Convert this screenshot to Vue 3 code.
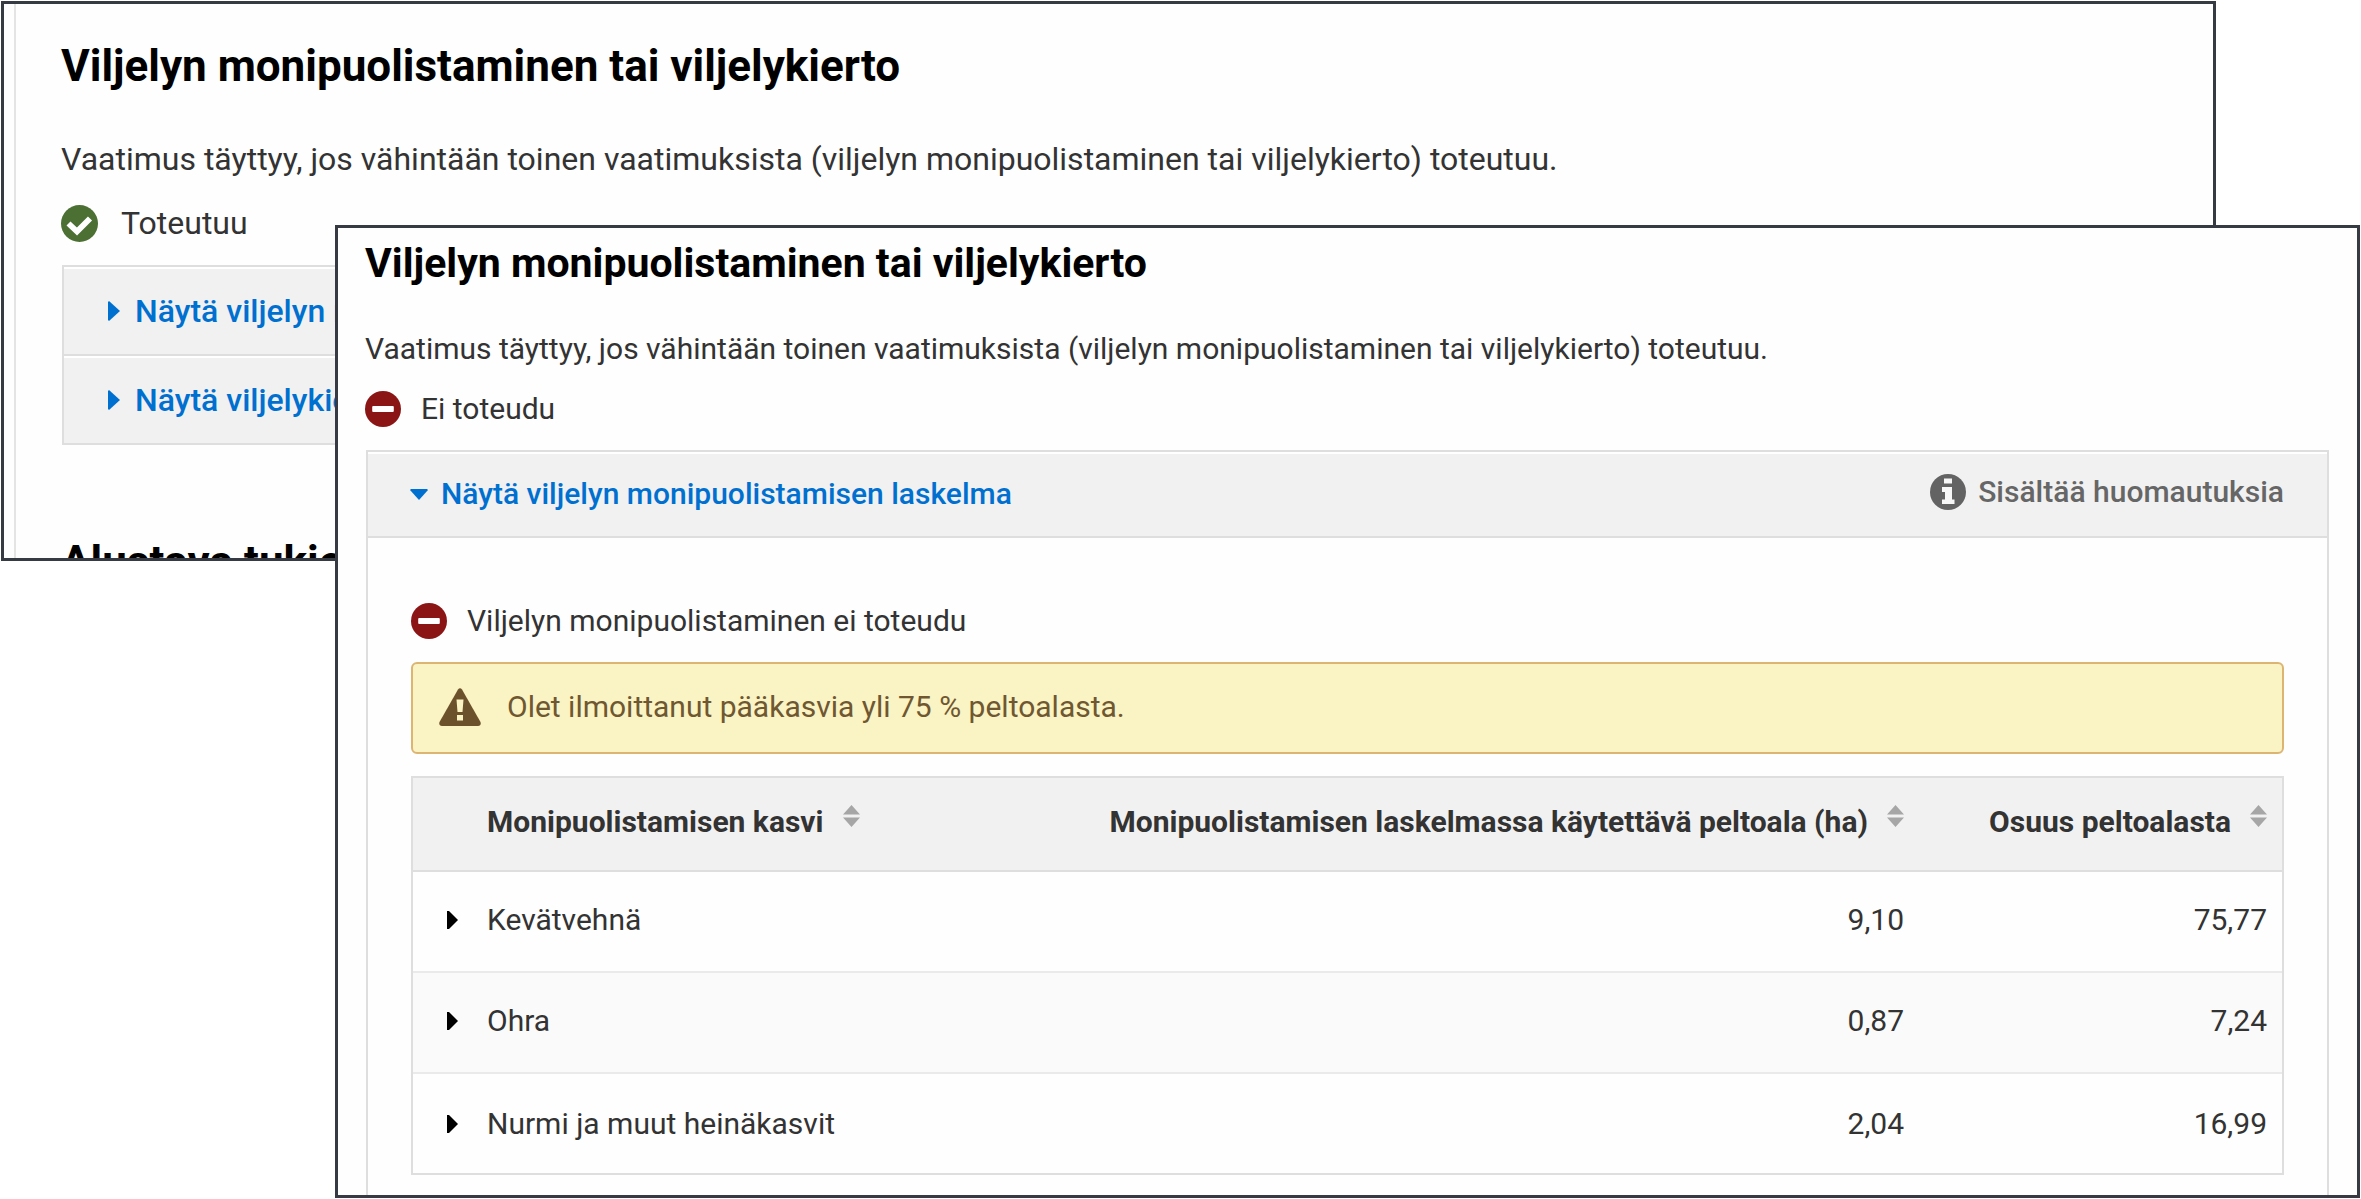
<script setup>
import { ref } from 'vue'

const requirement =
  'Vaatimus täyttyy, jos vähintään toinen vaatimuksista (viljelyn monipuolistaminen tai viljelykierto) toteutuu.'

const backRows = [
  'Näytä viljelyn monipuolistamisen laskelma',
  'Näytä viljelykierron laskelma',
]

const columns = [
  { key: 'crop', label: 'Monipuolistamisen kasvi' },
  { key: 'area', label: 'Monipuolistamisen laskelmassa käytettävä peltoala (ha)' },
  { key: 'share', label: 'Osuus peltoalasta' },
]

const crops = ref([
  { name: 'Kevätvehnä', area: '9,10', share: '75,77' },
  { name: 'Ohra', area: '0,87', share: '7,24' },
  { name: 'Nurmi ja muut heinäkasvit', area: '2,04', share: '16,99' },
])
</script>

<template>
  <main class="stage">
    <section class="window back">
      <div class="back-body">
        <h2 class="title">Viljelyn monipuolistaminen tai viljelykierto</h2>
        <p class="lead">{{ requirement }}</p>
        <div class="status">
          <svg class="status-icon" viewBox="0 0 37 37" aria-hidden="true">
            <circle cx="18.500" cy="18.500" r="18.500" fill="#4c7034" />
            <path d="M7.500 18.500 L16 26.500 L29 13.500" fill="none" stroke="#fff" stroke-width="5.800" />
          </svg>
          <span>Toteutuu</span>
        </div>
        <ul class="accordion">
          <li v-for="row in backRows" :key="row" class="accordion-item">
            <button type="button" class="toggle">
              <svg class="caret-right" viewBox="0 0 12 20" aria-hidden="true">
                <path d="M0 1 L1 0 L12 10 L1 20 L0 19 Z" fill="currentColor" />
              </svg>
              <span>{{ row }}</span>
            </button>
          </li>
        </ul>
        <h2 class="title next-title">Alustava tukien määrä</h2>
      </div>
    </section>

    <section class="window front">
      <h2 class="title">Viljelyn monipuolistaminen tai viljelykierto</h2>
      <p class="lead">{{ requirement }}</p>
      <div class="status">
        <svg class="status-icon" viewBox="0 0 35 35" aria-hidden="true">
          <circle cx="17.500" cy="17.500" r="17.500" fill="#8b1515" />
          <rect x="7" y="14.500" width="21" height="6" rx="1" fill="#fff" />
        </svg>
        <span>Ei toteudu</span>
      </div>

      <div class="panel">
        <div class="panel-head">
          <button type="button" class="toggle" aria-expanded="true">
            <svg class="caret-down" viewBox="0 0 18 11" aria-hidden="true">
              <path d="M0 1 L1 0 H17 L18 1 L9 11 Z" fill="currentColor" />
            </svg>
            <span>Näytä viljelyn monipuolistamisen laskelma</span>
          </button>
          <div class="note">
            <svg class="note-icon" viewBox="0 0 36 36" aria-hidden="true">
              <circle cx="18" cy="18" r="18" fill="#636363" />
              <path
                d="M14 4.500 H22 V9.500 H14 Z M12 13 H22 V25.500 H24.500 V30 H12 V25.500 H15 V18 H12 Z"
                fill="#f7f7f7"
              />
            </svg>
            <span>Sisältää huomautuksia</span>
          </div>
        </div>

        <div class="panel-body">
          <div class="status">
            <svg class="status-icon" viewBox="0 0 35 35" aria-hidden="true">
              <circle cx="17.500" cy="17.500" r="17.500" fill="#8b1515" />
              <rect x="7" y="14.500" width="21" height="6" rx="1" fill="#fff" />
            </svg>
            <span>Viljelyn monipuolistaminen ei toteudu</span>
          </div>

          <div class="alert" role="alert">
            <svg class="alert-icon" viewBox="0 0 42 38" aria-hidden="true">
              <path
                d="M19 1.500 Q21 -1 23 1.500 L41.500 34 Q42.500 38 39 38 H3 Q-0.500 38 0.500 34 Z"
                fill="#6b522c"
              />
              <path d="M17.500 11.500 H24.500 L23.500 24 H18.500 Z M18 27 H24 V32.500 H18 Z" fill="#faf3c3" />
            </svg>
            <span>Olet ilmoittanut pääkasvia yli 75 % peltoalasta.</span>
          </div>

          <table class="crops">
            <thead>
              <tr>
                <th v-for="col in columns" :key="col.key" scope="col" :class="col.key">
                  <button type="button" class="sort">
                    <span>{{ col.label }}</span>
                    <svg class="sort-icon" viewBox="0 0 17 22" aria-hidden="true">
                      <path d="M8.500 0 L17 9.500 H0 Z M0 12.500 H17 L8.500 22 Z" fill="#a6a6a6" />
                    </svg>
                  </button>
                </th>
              </tr>
            </thead>
            <tbody>
              <tr v-for="crop in crops" :key="crop.name">
                <td class="crop">
                  <div class="crop-cell">
                    <button type="button" class="expand" :aria-label="crop.name">
                      <svg class="caret-row" viewBox="0 0 11 18" aria-hidden="true">
                        <path d="M0 0 H2 L11 9 L2 18 H0 Z" fill="#000" />
                      </svg>
                    </button>
                    <span>{{ crop.name }}</span>
                  </div>
                </td>
                <td class="area">{{ crop.area }}</td>
                <td class="share">{{ crop.share }}</td>
              </tr>
            </tbody>
          </table>
        </div>
      </div>
    </section>
  </main>
</template>

<style>
body {
  margin: 0;
  background: #fff;
}
</style>

<style scoped>
.stage {
  display: grid;
  align-items: start;
  padding: 1px;
  font-family: Roboto, "Liberation Sans", sans-serif;
  color: #333;
}

.window {
  grid-area: 1 / 1;
  box-sizing: border-box;
  border: 3px solid #363b43;
  background: #fefefe;
  overflow: hidden;
}

.back {
  height: 560px;
  margin-right: 144px;
  padding-left: 10px;
  font-size: 32px;
  line-height: 44px;
}

.back-body {
  border-left: 2px solid #e4e4e4;
  padding: 36px 46px 0 45px;
}

.front {
  margin: 224px 0 0 334px;
  padding: 10px 28px 0 27px;
  font-size: 30px;
  line-height: 42px;
}

.title {
  margin: 0;
  color: #000;
  font-weight: 700;
}

.back .title {
  font-size: 44px;
  line-height: 52px;
}

.front .title {
  font-size: 41px;
  line-height: 50px;
}

.lead {
  margin: 40px 0 18px;
}

.back .lead {
  margin: 45px 0 20px;
}

.status {
  display: flex;
  align-items: center;
  gap: 20px;
  margin-bottom: 20px;
}

.back .status {
  gap: 23px;
}

.status-icon {
  flex: none;
  width: 36px;
  height: 36px;
}

.back .status-icon {
  width: 37px;
  height: 37px;
}

button {
  margin: 0;
  padding: 0;
  border: 0;
  background: none;
  font: inherit;
  color: inherit;
  text-align: left;
  cursor: pointer;
}

.accordion {
  margin: 0 0 0 1px;
  padding: 0;
  list-style: none;
  border: 2px solid #dedede;
  border-top: 0;
}

.accordion-item {
  border-top: 2px solid #dedede;
  box-shadow: inset 0 2px #fff;
  background: #f1f1f1;
}

.toggle {
  display: flex;
  align-items: center;
  color: #0070d0;
  font-weight: 500;
  white-space: nowrap;
}

.accordion .toggle {
  gap: 15px;
  width: 100%;
  height: 87px;
  padding-left: 44px;
}

.caret-right {
  width: 12px;
  height: 20px;
}

.back .next-title {
  margin-top: 91px;
}

.panel {
  margin-left: 1px;
  border: 2px solid #dedede;
  border-bottom: 0;
}

.panel-head {
  display: flex;
  align-items: center;
  justify-content: space-between;
  height: 84px;
  padding: 0 43px 0 42px;
  border-bottom: 2px solid #dedede;
  box-shadow: inset 0 2px #fff;
  background: #f1f1f1;
}

.panel-head .toggle {
  gap: 13px;
}

.caret-down {
  width: 18px;
  height: 11px;
}

.note {
  display: flex;
  align-items: center;
  gap: 12px;
  padding-bottom: 4px;
  color: #666;
  font-weight: 500;
}

.note-icon {
  width: 36px;
  height: 36px;
}

.panel-body {
  padding: 62px 43px 20px;
}

.alert {
  display: flex;
  align-items: center;
  gap: 26px;
  box-sizing: border-box;
  height: 92px;
  margin-bottom: 22px;
  padding: 0 26px 2px;
  border: 2px solid #dcb573;
  border-radius: 6px;
  background: #faf3c3;
  color: #6f5731;
}

.alert-icon {
  width: 42px;
  height: 38px;
}

.crops {
  width: 100%;
  border-collapse: separate;
  border-spacing: 0;
  border: 2px solid #dedede;
}

.crops th,
.crops td {
  box-sizing: border-box;
  text-align: right;
  vertical-align: middle;
}

.crops th {
  height: 94px;
  padding: 0 15px 6px 60px;
  border-bottom: 2px solid #dedede;
  background: #f1f1f1;
  font-weight: 700;
}

.crops td {
  height: 101px;
  padding: 0 15px 3px 60px;
  border-bottom: 2px solid #eaeaea;
}

.crops tbody tr:nth-child(even) td {
  background: #fafafa;
}

.crops tbody tr:last-child td {
  height: 99px;
  padding-bottom: 0;
  border-bottom: 0;
}

.crops .crop {
  text-align: left;
}

.crops th.crop {
  padding-left: 74px;
}

.crops td.crop {
  padding-left: 34px;
}

.crops .share {
  width: 363px;
}

.sort {
  display: inline-flex;
  align-items: center;
  gap: 19px;
  vertical-align: middle;
  white-space: nowrap;
}

.sort-icon {
  width: 17px;
  height: 22px;
  margin-bottom: 12px;
}

.crop-cell {
  display: flex;
  align-items: center;
  gap: 29px;
}

.expand {
  display: flex;
}

.caret-row {
  width: 11px;
  height: 18px;
}
</style>
